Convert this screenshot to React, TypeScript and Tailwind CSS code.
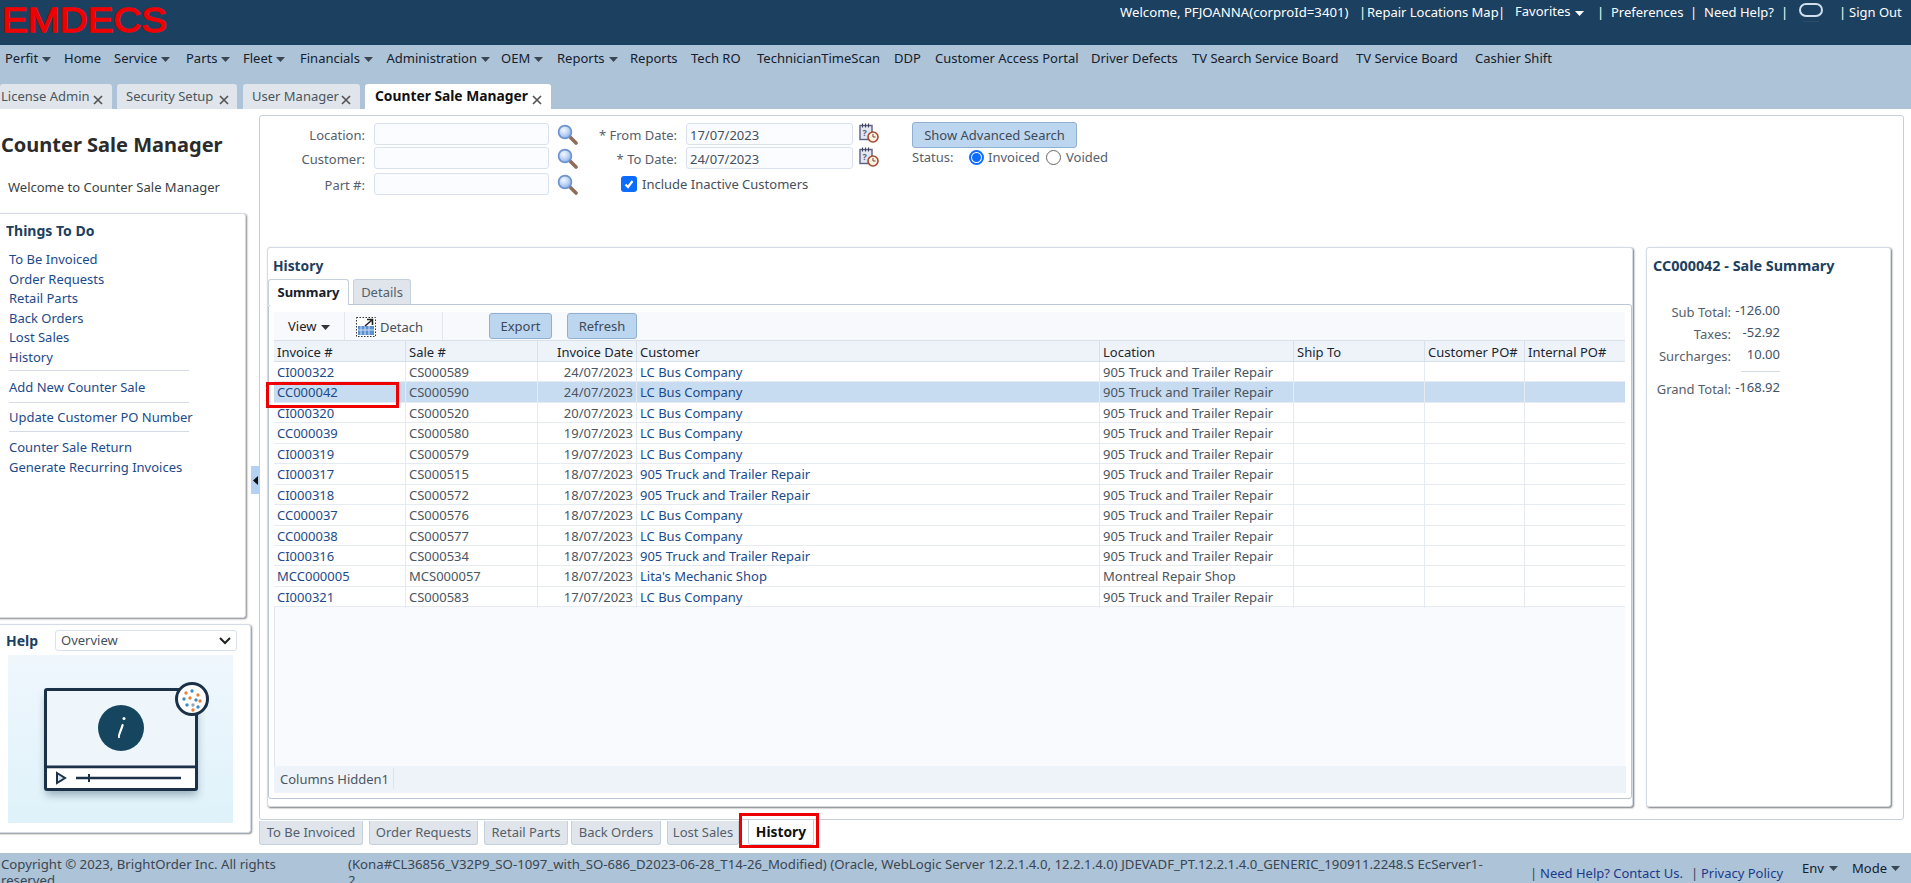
import React from "react";

function Caret({ className = "" }: { className?: string }) {
  return (
    <svg width="9" height="5" viewBox="0 0 9 5" className={className}>
      <path d="M0 0h9L4.5 5z" fill="currentColor" />
    </svg>
  );
}

function CloseX() {
  return (
    <svg width="10" height="10" viewBox="0 0 10 10" className="absolute">
      <path d="M1 1l8 8M9 1l-8 8" stroke="#555" strokeWidth="1.7" />
    </svg>
  );
}

function Magnifier({ className = "" }: { className?: string }) {
  return (
    <svg width="21" height="21" viewBox="0 0 21 21" className={className}>
      <defs>
        <radialGradient id="glass" cx="0.4" cy="0.35" r="0.7">
          <stop offset="0" stopColor="#f2f7ff" />
          <stop offset="0.6" stopColor="#b7d0f4" />
          <stop offset="1" stopColor="#7fa6e0" />
        </radialGradient>
      </defs>
      <path d="M12.5 12.5l6.5 6.5" stroke="#8f6c59" strokeWidth="3.6" strokeLinecap="round" />
      <circle cx="8" cy="8" r="6.4" fill="url(#glass)" stroke="#6f93cf" strokeWidth="1.7" />
    </svg>
  );
}

function DateIcon({ className = "" }: { className?: string }) {
  return (
    <svg width="20" height="20" viewBox="0 0 20 20" className={className}>
      <rect x="1" y="2.5" width="12" height="14" fill="#e4e6ef" stroke="#5b5f80" strokeWidth="1.4" />
      <path d="M3.5 0.5v4M6.5 0.5v4M9.5 0.5v4" stroke="#3e4260" strokeWidth="1.1" />
      <text x="3.4" y="13" fontSize="9" fontWeight="700" fill="#5b5f80" fontFamily="Noto Sans">?</text>
      <circle cx="14" cy="14" r="5" fill="#fff3df" stroke="#a34a33" strokeWidth="1.6" />
      <path d="M14 11v3h2.5" stroke="#7d3a28" strokeWidth="1" fill="none" />
    </svg>
  );
}

function TopTab({ label, w, pad, active = false, ml = "" }: { label: string; w: string; pad: string; active?: boolean; ml?: string }) {
  return (
    <div
      className={`h-[25px] rounded-t-[3px] whitespace-nowrap ${w} ${ml} ${pad} ${
        active ? "bg-white text-[#101010] font-bold text-[13.8px]" : "bg-[#dfe5ea] text-[#4b5560]"
      } leading-[24px]`}
    >
      {label}
    </div>
  );
}

const menu: [string, boolean, number][] = [
  ["Perfit", true, 5],
  ["Home", false, 64],
  ["Service", true, 114],
  ["Parts", true, 186],
  ["Fleet", true, 243],
  ["Financials", true, 300],
  ["Administration", true, 386.5],
  ["OEM", true, 501],
  ["Reports", true, 557],
  ["Reports", false, 630],
  ["Tech RO", false, 691],
  ["TechnicianTimeScan", false, 757],
  ["DDP", false, 894],
  ["Customer Access Portal", false, 935],
  ["Driver Defects", false, 1091],
  ["TV Search Service Board", false, 1192],
  ["TV Service Board", false, 1356],
  ["Cashier Shift", false, 1475],
];

const headers = ["Invoice #", "Sale #", "Invoice Date", "Customer", "Location", "Ship To", "Customer PO#", "Internal PO#"];

const rows = [
  ["CI000322", "CS000589", "24/07/2023", "LC Bus Company", "905 Truck and Trailer Repair"],
  ["CC000042", "CS000590", "24/07/2023", "LC Bus Company", "905 Truck and Trailer Repair"],
  ["CI000320", "CS000520", "20/07/2023", "LC Bus Company", "905 Truck and Trailer Repair"],
  ["CC000039", "CS000580", "19/07/2023", "LC Bus Company", "905 Truck and Trailer Repair"],
  ["CI000319", "CS000579", "19/07/2023", "LC Bus Company", "905 Truck and Trailer Repair"],
  ["CI000317", "CS000515", "18/07/2023", "905 Truck and Trailer Repair", "905 Truck and Trailer Repair"],
  ["CI000318", "CS000572", "18/07/2023", "905 Truck and Trailer Repair", "905 Truck and Trailer Repair"],
  ["CC000037", "CS000576", "18/07/2023", "LC Bus Company", "905 Truck and Trailer Repair"],
  ["CC000038", "CS000577", "18/07/2023", "LC Bus Company", "905 Truck and Trailer Repair"],
  ["CI000316", "CS000534", "18/07/2023", "905 Truck and Trailer Repair", "905 Truck and Trailer Repair"],
  ["MCC000005", "MCS000057", "18/07/2023", "Lita's Mechanic Shop", "Montreal Repair Shop"],
  ["CI000321", "CS000583", "17/07/2023", "LC Bus Company", "905 Truck and Trailer Repair"],
];

const grid = "grid grid-cols-[131px_132px_99px_463px_194px_131px_100px_101px]";

function LeftLink({ children, className = "" }: { children: React.ReactNode; className?: string }) {
  return <div className={`h-[19.5px] leading-[19px] text-[#1c4a8a] whitespace-nowrap ${className}`}>{children}</div>;
}

function Field({ label, top, x, w, value = "" }: { label: string; top: number; x: number; w: number; value?: string }) {
  return (
    <>
      <div className="absolute text-right text-[#55606c] leading-[24px] whitespace-nowrap" style={{ top, left: x - 130, width: 121 }}>
        {label}
      </div>
      <div
        className="absolute h-[22px] rounded-[3px] border border-[#d9e2ec] bg-[#fafcff] pl-[3px] leading-[22px] text-[#45505c]"
        style={{ top, left: x, width: w }}
      >
        {value}
      </div>
    </>
  );
}

export default function App() {
  return (
    <div className="relative w-[1911px] h-[883px] overflow-hidden bg-white text-[13px] [font-family:'Noto_Sans','Liberation_Sans',sans-serif]">
      {/* Header */}
      <div className="absolute left-0 top-0 w-full h-[45px] bg-[#1c4060] text-white">
        <svg width="172" height="44" viewBox="0 0 172 44" className="absolute left-0 top-0" aria-label="EMDECS">
          <text
            x="2"
            y="32"
            textLength="165"
            lengthAdjust="spacingAndGlyphs"
            fontSize="34.5"
            fontWeight="400"
            fontFamily="Liberation Sans"
            fill="#f00000"
            stroke="#f00000"
            strokeWidth="1.3"
            strokeLinejoin="round"
          >
            EMDECS
          </text>
        </svg>
        <span className="absolute left-[1120px] top-[4px] text-[13.2px] leading-[16px] whitespace-nowrap">Welcome, PFJOANNA(corproId=3401)</span>
        <span className="absolute left-[1359px] top-[4px] leading-[16px]">|</span>
        <span className="absolute left-[1367px] top-[4px] leading-[16px] whitespace-nowrap">Repair Locations Map</span>
        <span className="absolute left-[1498px] top-[4px] leading-[16px]">|</span>
        <span className="absolute left-[1515px] top-[3px] leading-[16px]">Favorites</span>
        <Caret className="absolute left-[1575px] top-[11px]" />
        <span className="absolute left-[1597px] top-[4px] leading-[16px]">|</span>
        <span className="absolute left-[1611px] top-[4px] leading-[16px]">Preferences</span>
        <span className="absolute left-[1690px] top-[4px] leading-[16px]">|</span>
        <span className="absolute left-[1704px] top-[4px] leading-[16px] whitespace-nowrap">Need Help?</span>
        <span className="absolute left-[1781px] top-[4px] leading-[16px]">|</span>
        <div className="absolute left-[1799px] top-[3px] w-[24px] h-[14px] rounded-[7px] border-[2.5px] border-[#cfdeec]" />
        <div className="absolute left-[1803px] top-[21px] w-[16px] h-px bg-[#2f4d6b]" />
        <span className="absolute left-[1839px] top-[4px] leading-[16px]">|</span>
        <span className="absolute left-[1849px] top-[4px] leading-[16px] whitespace-nowrap">Sign Out</span>
      </div>

      {/* Nav */}
      <div className="absolute left-0 top-[45px] w-full h-[64px] bg-[#adc3d8] text-[#14202c]">
        {menu.map(([label, caret, x], i) => (
          <div key={i} className="absolute top-[5px] flex items-center gap-[4px] h-[18px] whitespace-nowrap" style={{ left: x }}>
            <span>{label}</span>
            {caret && <Caret className="text-[#3a4652]" />}
          </div>
        ))}
        <div className="absolute left-0 top-[39px] flex">
          <TopTab label="License Admin" w="w-[112px]" pad="pl-[1px]" />
          <TopTab label="Security Setup" w="w-[120px]" pad="pl-[9px]" ml="ml-[5px]" />
          <TopTab label="User Manager" w="w-[117px]" pad="pl-[9px]" ml="ml-[6px]" />
          <TopTab label="Counter Sale Manager" w="w-[186px]" pad="pl-[10px]" ml="ml-[5px]" active />
        </div>
        <div className="absolute left-[93px] top-[50px]"><CloseX /></div>
        <div className="absolute left-[219px] top-[50px]"><CloseX /></div>
        <div className="absolute left-[341px] top-[50px]"><CloseX /></div>
        <div className="absolute left-[532px] top-[50px]"><CloseX /></div>
      </div>

      {/* Left column */}
      <div className="absolute left-[1px] top-[133px] text-[20px] font-bold text-[#2b2b2b] leading-[24px] whitespace-nowrap">Counter Sale Manager</div>
      <div className="absolute left-[8px] top-[178px] text-[#3a3f45] leading-[18px] whitespace-nowrap">Welcome to Counter Sale Manager</div>

      <div className="absolute left-[-4px] top-[213px] w-[250px] h-[405px] rounded-[3px] border border-[#d3dce5] bg-white shadow-[1px_1px_2px_#888]">
        <div className="absolute left-[9px] top-[8px] font-bold text-[#1c4060] text-[14px] leading-[18px]">Things To Do</div>
        <div className="absolute left-[12px] top-[36px] w-[180px]">
          <LeftLink>To Be Invoiced</LeftLink>
          <LeftLink>Order Requests</LeftLink>
          <LeftLink>Retail Parts</LeftLink>
          <LeftLink>Back Orders</LeftLink>
          <LeftLink>Lost Sales</LeftLink>
          <LeftLink>History</LeftLink>
          <div className="h-px bg-[#d3dce5] mt-[3px]" />
          <LeftLink className="mt-[7px]">Add New Counter Sale</LeftLink>
          <div className="h-px bg-[#d3dce5] mt-[4px]" />
          <LeftLink className="mt-[5px]">Update Customer PO Number</LeftLink>
          <div className="h-px bg-[#d3dce5] mt-[4px]" />
          <LeftLink className="mt-[6px]">Counter Sale Return</LeftLink>
          <LeftLink>Generate Recurring Invoices</LeftLink>
        </div>
      </div>

      <div className="absolute left-[251px] top-[466px] w-[9px] h-[28px] bg-[#b4d2ef] flex items-center justify-center">
        <svg width="5" height="9" viewBox="0 0 5 9"><path d="M5 0v9L0 4.5z" fill="#111" /></svg>
      </div>

      <div className="absolute left-[-4px] top-[624px] w-[255px] h-[209px] rounded-[3px] border border-[#d3dce5] bg-white shadow-[1px_1px_2px_#888]">
        <div className="absolute left-[9px] top-[6px] font-bold text-[#1c4060] text-[14px] leading-[20px]">Help</div>
        <div className="absolute left-[58px] top-[5px] w-[182px] h-[21px] rounded-[3px] border border-[#d9e2ec] bg-white pl-[5px] leading-[19px] text-[#45505c]">
          Overview
          <svg width="12" height="8" viewBox="0 0 12 8" className="absolute right-[5px] top-[6px]">
            <path d="M1 1l5 5 5-5" stroke="#222" strokeWidth="2" fill="none" />
          </svg>
        </div>
        <div className="absolute left-[11px] top-[30px] w-[225px] h-[168px] bg-gradient-to-b from-[#eff7fd] to-[#dff2f9]">
          <svg width="225" height="168" viewBox="0 0 225 168" className="absolute left-0 top-0">
            <rect x="38" y="40" width="151" height="100" fill="#27465e" opacity="0.4" className="blur-[4px]" />
            <rect x="37.5" y="34.5" width="151" height="100" rx="1.5" fill="#eff6fb" stroke="#1b3148" strokeWidth="3" />
            <path d="M37 112h152" stroke="#1b3148" strokeWidth="3" />
            <rect x="39" y="113.5" width="148" height="19.5" fill="#ffffff" />
            <circle cx="113" cy="73" r="23" fill="#16465f" />
            <path d="M111 82c-1-1 3-9 3.6-12" stroke="#fff" strokeWidth="2.2" strokeLinecap="round" fill="none" />
            <circle cx="116" cy="63.5" r="1.5" fill="#fff" />
            <path d="M49 118l8 5-8 5z" fill="#dbe6ee" stroke="#1b3148" strokeWidth="2" />
            <path d="M68 123h105" stroke="#1b3148" strokeWidth="2.6" />
            <path d="M81 119v8" stroke="#1b3148" strokeWidth="2" />
            <circle cx="184" cy="44" r="15.5" fill="#fff" stroke="#1b3148" strokeWidth="3" />
            {[[178,38,"#e8813a"],[184,36,"#3b8cc4"],[190,40,"#e8813a"],[176,44,"#3b8cc4"],[182,43,"#e8813a"],[188,45,"#3b8cc4"],[192,46,"#e8813a"],[179,50,"#3b8cc4"],[185,50,"#9aa7b2"],[190,52,"#3b8cc4"],[185,55,"#e8813a"]].map(([x,y,c],i)=>(
              <circle key={i} cx={x as number} cy={y as number} r="1.7" fill={c as string} />
            ))}
          </svg>
        </div>
      </div>

      {/* Main panel */}
      <div className="absolute left-[259px] top-[115px] w-[1645px] h-[705px] rounded-[3px] border border-[#c4d0dc] bg-white" />

      {/* Search form */}
      <Field label="Location:" top={123} x={374} w={175} />
      <Field label="Customer:" top={147} x={374} w={175} />
      <Field label="Part #:" top={173} x={374} w={175} />
      <Magnifier className="absolute left-[557px] top-[124px]" />
      <Magnifier className="absolute left-[557px] top-[148px]" />
      <Magnifier className="absolute left-[557px] top-[174px]" />
      <Field label="* From Date:" top={123} x={686} w={167} value="17/07/2023" />
      <Field label="* To Date:" top={147} x={686} w={167} value="24/07/2023" />
      <DateIcon className="absolute left-[859px] top-[123px]" />
      <DateIcon className="absolute left-[859px] top-[147px]" />
      <div className="absolute left-[912px] top-[122px] w-[165px] h-[26px] rounded-[3px] border border-[#8fb0d0] bg-[#bdd6f0] text-center leading-[24px] text-[#3d4a58] whitespace-nowrap">
        Show Advanced Search
      </div>
      <span className="absolute left-[912px] top-[148px] leading-[18px] text-[#55606c]">Status:</span>
      <div className="absolute left-[969px] top-[150px] w-[15px] h-[15px] rounded-full border-2 border-[#0b6cff] bg-white flex items-center justify-center">
        <div className="w-[9px] h-[9px] rounded-full bg-[#0b6cff]" />
      </div>
      <span className="absolute left-[988px] top-[148px] leading-[18px] text-[#55606c]">Invoiced</span>
      <div className="absolute left-[1046px] top-[150px] w-[15px] h-[15px] rounded-full border border-[#666] bg-white" />
      <span className="absolute left-[1066px] top-[148px] leading-[18px] text-[#55606c]">Voided</span>
      <div className="absolute left-[621px] top-[176px] w-[16px] h-[16px] rounded-[3px] bg-[#0b6cff] flex items-center justify-center">
        <svg width="12" height="12" viewBox="0 0 12 12"><path d="M2.5 6.5l2.5 2.5 4.5-6" stroke="#fff" strokeWidth="2.2" fill="none" /></svg>
      </div>
      <span className="absolute left-[642px] top-[175px] leading-[18px] text-[#45505c] whitespace-nowrap">Include Inactive Customers</span>

      {/* History panel */}
      <div className="absolute left-[267px] top-[247px] w-[1366px] h-[560px] rounded-[3px] border border-[#d3dce5] bg-white shadow-[1px_1px_2px_#777]">
        <div className="absolute left-[5px] top-[9px] font-bold text-[13.8px] text-[#1c4060] leading-[18px]">History</div>
      </div>
      <div className="absolute left-[268px] top-[304px] w-[1364px] h-[495px] rounded-[3px] border border-[#b9c7d5] bg-white" />
      <div className="absolute left-[268px] top-[279px] w-[81px] h-[26px] rounded-t-[3px] border border-b-0 border-[#c4d0dc] bg-white text-center font-bold text-[#16202a] leading-[25px]">Summary</div>
      <div className="absolute left-[353px] top-[279px] w-[58px] h-[25px] rounded-t-[3px] border border-b-0 border-[#c4d0dc] bg-[#dfe5ea] text-center text-[#55606c] leading-[25px]">Details</div>

      {/* Toolbar */}
      <div className="absolute left-[274px] top-[312px] w-[1351px] h-[28px] bg-[#f7f9fc]" />
      <span className="absolute left-[288px] top-[317px] leading-[18px] text-[#222]">View</span>
      <Caret className="absolute left-[321px] top-[325px] text-[#333]" />
      <div className="absolute left-[344px] top-[312px] w-px h-[28px] bg-[#e3e8ee]" />
      <svg width="20" height="20" viewBox="0 0 20 20" className="absolute left-[356px] top-[317px]">
        <rect x="0.5" y="0.5" width="19" height="19" fill="#fff" stroke="#333" strokeDasharray="1.5 1.5" />
        <rect x="2" y="9" width="16" height="9" fill="#5a8fd0" />
        <path d="M5 9v9M9 9v9M13 9v9M2 13h16" stroke="#cfe0f5" strokeWidth="1" />
        <path d="M9 9l7-6M11 2.5h5.5V8" stroke="#222" strokeWidth="1.6" fill="none" />
      </svg>
      <span className="absolute left-[380px] top-[318px] leading-[18px] text-[#45505c]">Detach</span>
      <div className="absolute left-[442px] top-[312px] w-px h-[28px] bg-[#e3e8ee]" />
      <div className="absolute left-[489px] top-[313px] w-[63px] h-[26px] rounded-[3px] border border-[#8fb0d0] bg-[#bdd6f0] text-center leading-[24px] text-[#3d4a58]">Export</div>
      <div className="absolute left-[567px] top-[313px] w-[70px] h-[26px] rounded-[3px] border border-[#8fb0d0] bg-[#bdd6f0] text-center leading-[24px] text-[#3d4a58]">Refresh</div>

      {/* Table */}
      <div className="absolute left-[274px] top-[340px] w-[1351px] h-[426px] bg-[#f8fafd] border-l border-[#dde4ec]" />
      <div className={`absolute left-[274px] top-[340px] w-[1351px] h-[22px] ${grid} bg-[#eef3fa] border-t border-b border-[#d8e0e9] text-[#1c2630]`}>
        {headers.map((h, i) => (
          <div
            key={i}
            className={`h-full leading-[22px] whitespace-nowrap ${i > 0 ? "border-l border-[#d8e0e9]" : ""} ${i === 2 ? "text-right pr-[3px]" : "pl-[3px]"}`}
          >
            {h}
          </div>
        ))}
      </div>
      <div className="absolute left-[274px] top-[362px] w-[1351px]">
        {rows.map((r, i) => (
          <div
            key={i}
            className={`${grid} h-[20.45px] ${i === 1 ? "bg-[#c7dcf1]" : "bg-white"} border-b border-[#e6ebf1] text-[#4b5560]`}
          >
            {[...r, "", "", ""].map((c, j) => (
              <div
                key={j}
                className={`h-full leading-[21px] whitespace-nowrap ${j > 0 ? "border-l border-[#e6ebf1]" : ""} ${j === 2 ? "text-right pr-[3px]" : "pl-[3px]"} ${
                  j === 0 || j === 3 ? "text-[#1c4a8a]" : ""
                }`}
              >
                {c}
              </div>
            ))}
          </div>
        ))}
      </div>
      <div className="absolute left-[274px] top-[766px] w-[1352px] h-[27px] bg-[#eef2f9]">
        <span className="absolute left-[6px] top-[4px] leading-[18px] text-[#4b5560] whitespace-nowrap">Columns Hidden1</span>
        <div className="absolute left-[119px] top-[2px] w-px h-[21px] bg-[#dde4ec]" />
      </div>

      <div className="absolute left-[266px] top-[382px] w-[133px] h-[26px] border-[3px] border-[#ee0000]" />

      {/* Sale summary */}
      <div className="absolute left-[1646px] top-[247px] w-[245px] h-[560px] rounded-[3px] border border-[#d3dce5] bg-white shadow-[1px_1px_2px_#777]">
        <div className="absolute left-[6px] top-[9px] font-bold text-[14.4px] text-[#1c4060] leading-[18px] whitespace-nowrap">CC000042 - Sale Summary</div>
      </div>
      {[
        ["Sub Total:", "-126.00", 303],
        ["Taxes:", "-52.92", 325],
        ["Surcharges:", "10.00", 347],
        ["Grand Total:", "-168.92", 380],
      ].map(([l, v, y]) => (
        <React.Fragment key={l as string}>
          <span className="absolute left-[1630px] w-[101px] text-right leading-[18px] text-[#55606c] whitespace-nowrap" style={{ top: y as number }}>{l}</span>
          <span className="absolute left-[1731px] w-[49px] text-right leading-[18px] text-[#3f5166] whitespace-nowrap" style={{ top: (y as number) - 2 }}>{v}</span>
        </React.Fragment>
      ))}
      <div className="absolute left-[1741px] top-[371px] w-[39px] h-px bg-[#d3dce5]" />

      {/* Bottom tabs */}
      {[
        ["To Be Invoiced", 259, 104],
        ["Order Requests", 369, 109],
        ["Retail Parts", 484, 84],
        ["Back Orders", 571, 90],
        ["Lost Sales", 667, 72],
      ].map(([l, x, w]) => (
        <div
          key={l as string}
          className="absolute top-[821px] h-[24px] rounded-b-[3px] border border-t-0 border-[#c4d0dc] bg-[#dfe5ea] text-center leading-[23px] text-[#55606c] whitespace-nowrap"
          style={{ left: x as number, width: w as number }}
        >
          {l}
        </div>
      ))}
      <div className="absolute left-[748px] top-[820px] w-[66px] h-[25px] rounded-b-[3px] border border-t-0 border-[#c4d0dc] bg-white text-center font-bold text-[13.8px] text-[#101010] leading-[24px]">History</div>
      <div className="absolute left-[739px] top-[813px] w-[80px] h-[35px] border-[3px] border-[#ee0000]" />

      {/* Footer */}
      <div className="absolute left-0 top-[853px] w-full h-[30px] bg-[#adc3d8] text-[#3a4652] overflow-hidden">
        <div className="absolute left-[1px] top-[3px] w-[290px] text-[13.2px] leading-[16px]">Copyright © 2023, BrightOrder Inc. All rights reserved</div>
        <div className="absolute left-[348px] top-[3px] w-[1180px] text-[13.2px] leading-[16px] [overflow-wrap:anywhere]">
          (Kona#CL36856_V32P9_SO-1097_with_SO-686_D2023-06-28_T14-26_Modified) (Oracle, WebLogic Server 12.2.1.4.0, 12.2.1.4.0) JDEVADF_PT.12.2.1.4.0_GENERIC_190911.2248.S EcServer1-
          <br />2
        </div>
        <span className="absolute left-[1530px] top-[12px] leading-[16px]">|</span>
        <span className="absolute left-[1540px] top-[12px] leading-[16px] text-[#1c3a8a] whitespace-nowrap">Need Help? Contact Us.</span>
        <span className="absolute left-[1691px] top-[12px] leading-[16px]">|</span>
        <span className="absolute left-[1701px] top-[12px] leading-[16px] text-[#1c3a8a] whitespace-nowrap">Privacy Policy</span>
        <span className="absolute left-[1802px] top-[7px] leading-[16px] text-[#14202c]">Env</span>
        <Caret className="absolute left-[1829px] top-[13px] text-[#3a4652]" />
        <span className="absolute left-[1852px] top-[7px] leading-[16px] text-[#14202c]">Mode</span>
        <Caret className="absolute left-[1891px] top-[13px] text-[#3a4652]" />
      </div>
    </div>
  );
}
